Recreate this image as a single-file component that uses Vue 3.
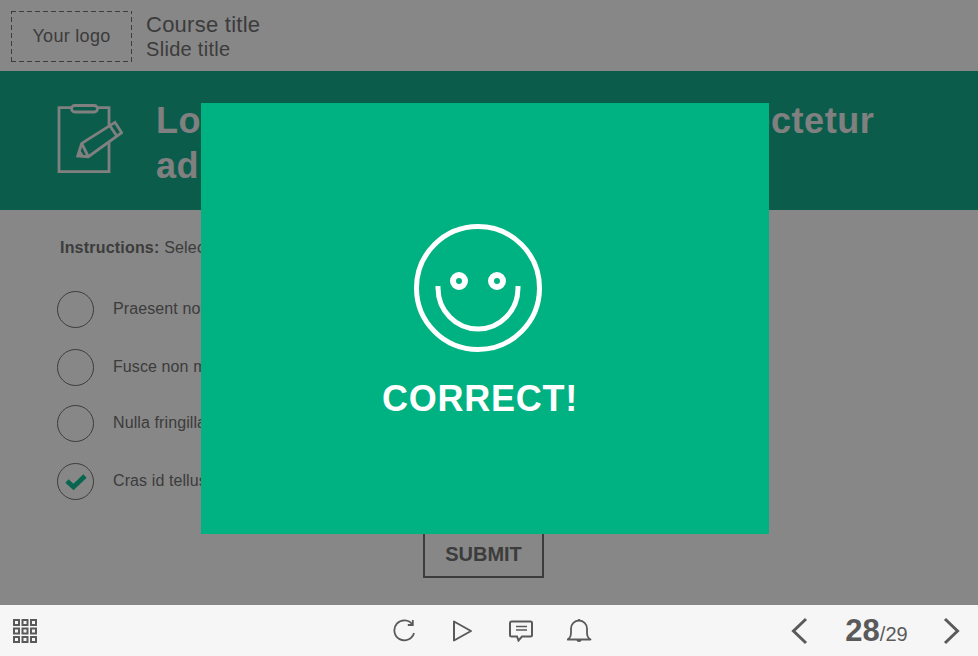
<script setup>
const options = [
  { id: 1, text: 'Praesent non lectus eu nisl', checked: false },
  { id: 2, text: 'Fusce non mauris vitae', checked: false },
  { id: 3, text: 'Nulla fringilla sem at', checked: false },
  { id: 4, text: 'Cras id tellus at nulla', checked: true }
]
</script>

<template>
  <div class="player">
    <div class="slide">
      <header class="top">
        <div class="logo">Your logo</div>
        <div class="titles">
          <div class="course">Course title</div>
          <div class="slide-title">Slide title</div>
        </div>
      </header>

      <section class="band">
        <svg class="clip" width="66" height="69" viewBox="0 0 66 69" fill="none" stroke="#f1f1f1" stroke-width="2.800">
          <path d="M14 3.700H2v64h50V3.700H41" />
          <rect x="14.500" y="1.500" width="26" height="6.500" rx="3.200" fill="#15ae8f" />
          <path d="M20.700 52l4-12.700L58 18.300l6.700 10.400-33.400 24z" fill="#15ae8f" />
          <path d="M53 22l7.300 10.700M25 40l6 12" />
          <path d="M20.700 52l2-6 3.800 6z" fill="#f1f1f1" stroke-width="1" />
        </svg>
        <h1>Lorem ipsum dolor sit amet, consectetur adipiscing elit</h1>
      </section>

      <main class="body">
        <p class="instructions"><b>Instructions:</b> Select the correct answer and click submit.</p>
        <ul class="options">
          <li v-for="opt in options" :key="opt.id">
            <span class="radio">
              <svg v-if="opt.checked" width="24" height="18" viewBox="0 0 24 18">
                <path d="M3 8l6.500 6L21 3" fill="none" stroke="#12bd97" stroke-width="4.800" />
              </svg>
            </span>
            <span class="label">{{ opt.text }}</span>
          </li>
        </ul>
        <div class="submit-row"><button class="submit">SUBMIT</button></div>
      </main>

      <div class="overlay"></div>

      <div class="modal">
        <svg width="130" height="130" viewBox="0 0 130 130" fill="none" stroke="#fff" stroke-width="5">
          <circle cx="65" cy="65" r="61.500" />
          <circle cx="46" cy="58" r="6" stroke-width="6" />
          <circle cx="84" cy="58" r="6" stroke-width="6" />
          <path d="M25 63v2a40 41 0 0 0 80 0v-2" />
        </svg>
        <div class="correct">CORRECT!</div>
      </div>
    </div>

    <footer class="bar">
      <svg class="grid" width="24" height="24" viewBox="0 0 24 24" fill="none" stroke="#5a5a5a" stroke-width="2">
        <template v-for="y in [1, 9.5, 18]" :key="y">
          <rect v-for="x in [1, 9.5, 18]" :key="x" :x="x" :y="y" width="5" height="5" />
        </template>
      </svg>

      <div class="tools">
        <svg width="24" height="24" viewBox="1 0 24 24" fill="none" stroke="#5a5a5a" stroke-width="1.800">
          <path d="M20.500 5.500A10 10 0 1 0 22 14" />
          <path d="M20.800 1v5h-5" />
        </svg>
        <svg width="24" height="24" viewBox="1 0 24 24" fill="none" stroke="#5a5a5a" stroke-width="2">
          <path d="M4 2.500v19L21 12z" stroke-linejoin="round" />
        </svg>
        <svg width="24" height="22" viewBox="0 0 24 22" fill="none" stroke="#5a5a5a" stroke-width="2">
          <path d="M2.500 1.500h19a1.500 1.500 0 0 1 1.500 1.500v12a1.500 1.500 0 0 1-1.500 1.500H13l-3.500 4-1.500-4H2.500A1.500 1.500 0 0 1 1 15V3a1.500 1.500 0 0 1 1.500-1.500z" />
          <path d="M7 6.500h11M7 10h11" stroke-width="1.600" />
        </svg>
        <svg width="26" height="25" viewBox="1 0 26 25" fill="none" stroke="#5a5a5a" stroke-width="1.800">
          <path d="M1.500 21.500c2-1 3.500-3 3.500-7V10.500a8 8 0 0 1 16 0v4c0 4 1.500 6 3.500 7z" stroke-linejoin="round" />
          <path d="M13 2.500V1" />
          <path d="M10.500 21.500a2.500 2.500 0 0 0 5 0z" fill="#5a5a5a" stroke="none" />
        </svg>
      </div>

      <div class="pager">
        <svg width="18" height="28" viewBox="0 0 18 28" fill="none" stroke="#5a5a5a" stroke-width="3">
          <path d="M16 2L3.500 14 16 26" />
        </svg>
        <div class="count"><b>28</b><span>/29</span></div>
        <svg width="18" height="28" viewBox="0 0 18 28" fill="none" stroke="#5a5a5a" stroke-width="3">
          <path d="M2 2l12.500 12L2 26" />
        </svg>
      </div>
    </footer>
  </div>
</template>

<style scoped>
.player {
  display: flex;
  flex-direction: column;
  width: 978px;
  height: 656px;
  overflow: hidden;
  font-family: "Liberation Sans", Arial, sans-serif;
  color: #727272;
  background: #fff;
}

.slide {
  position: relative;
  height: 605px;
}

.top {
  display: flex;
  align-items: center;
  gap: 14px;
  height: 71px;
  padding-left: 11px;
  box-sizing: border-box;
}

.logo {
  display: flex;
  align-items: center;
  justify-content: center;
  width: 121px;
  height: 51px;
  margin-top: 2px;
  box-sizing: border-box;
  font-size: 18px;
  letter-spacing: 0.3px;
  background:
    repeating-linear-gradient(90deg, #727272 0 5px, transparent 5px 8px) top / 100% 1px no-repeat,
    repeating-linear-gradient(90deg, #727272 0 5px, transparent 5px 8px) bottom / 100% 1px no-repeat,
    repeating-linear-gradient(0deg, #727272 0 5px, transparent 5px 8px) left / 1px 100% no-repeat,
    repeating-linear-gradient(0deg, #727272 0 5px, transparent 5px 8px) right / 1px 100% no-repeat;
}

.titles {
  margin-top: 2px;
}

.course {
  font-size: 22px;
  line-height: 26px;
  letter-spacing: 0.25px;
}

.slide-title {
  font-size: 20px;
  line-height: 23px;
  letter-spacing: 0.3px;
}

.band {
  display: flex;
  gap: 33px;
  height: 139px;
  padding: 27px 60px 0 57px;
  box-sizing: border-box;
  background: #15ae8f;
}

.clip {
  flex: none;
  margin-top: 6px;
}

.band h1 {
  margin: 0;
  color: #f1f1f1;
  font-size: 36px;
  line-height: 45px;
  font-weight: 700;
  letter-spacing: 0.57px;
}

.body {
  padding: 29px 0 0 57px;
  letter-spacing: 0.2px;
}

.instructions {
  margin: 0 0 0 3px;
  font-size: 16px;
  line-height: 18px;
}

.options {
  list-style: none;
  margin: 34px 0 0;
  padding: 0;
}

.options li {
  display: flex;
  align-items: center;
  gap: 19px;
  height: 37px;
  margin-bottom: 21px;
  font-size: 16px;
  letter-spacing: 0.1px;
}

.options li:nth-child(2) {
  margin-bottom: 19px;
}

.label {
  margin-bottom: 2px;
}

.radio {
  display: flex;
  align-items: center;
  justify-content: center;
  width: 37px;
  height: 37px;
  box-sizing: border-box;
  border: 1px solid #727272;
  border-radius: 50%;
}

.submit-row {
  display: flex;
  margin-top: 30px;
  padding-left: 366px;
}

.submit {
  width: 121px;
  height: 48px;
  border: 2px solid #727272;
  background: none;
  color: #727272;
  font: 700 20px "Liberation Sans", Arial, sans-serif;
}

.overlay {
  position: absolute;
  inset: 0;
  background: rgba(0, 0, 0, 0.47);
}

.modal {
  position: absolute;
  left: 201px;
  top: 103px;
  width: 568px;
  height: 431px;
  padding-top: 120px;
  box-sizing: border-box;
  display: flex;
  flex-direction: column;
  align-items: center;
  background: #00b182;
  color: #fff;
}

.modal svg {
  margin-left: -14px;
}

.correct {
  margin-top: 24px;
  margin-left: -10px;
  font-size: 36px;
  line-height: 44px;
  font-weight: 700;
  letter-spacing: 0.75px;
}

.bar {
  position: relative;
  display: flex;
  align-items: center;
  height: 51px;
  padding-left: 13px;
  background: #f6f6f6;
  color: #5a5a5a;
}

.grid {
  margin-top: 1px;
}

.tools {
  display: flex;
  align-items: center;
  gap: 34px;
  margin-left: 356px;
}

.pager {
  display: flex;
  align-items: center;
  margin-left: 197px;
}

.count {
  width: 135px;
  padding: 1px 0 0 2px;
  box-sizing: border-box;
  text-align: center;
}

.count b {
  font-size: 31px;
}

.count span {
  font-size: 20px;
}
</style>
